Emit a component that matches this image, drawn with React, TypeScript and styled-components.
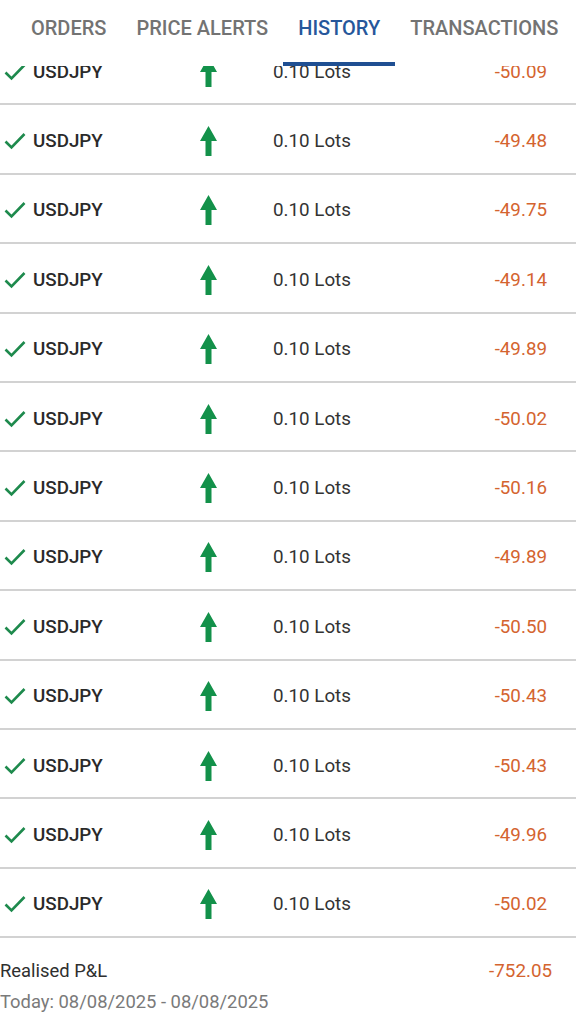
import styled, { createGlobalStyle } from 'styled-components';

const GlobalStyle = createGlobalStyle`
  html, body {
    margin: 0;
    padding: 0;
    background: #ffffff;
    font-family: Roboto, "Liberation Sans", Arial, sans-serif;
  }
`;

const Screen = styled.div`
  width: 576px;
  height: 1024px;
  overflow: hidden;
  background: #ffffff;
`;

const TabBar = styled.div`
  position: sticky;
  top: 0;
  z-index: 2;
  height: 66px;
  display: flex;
  align-items: flex-start;
  padding-left: 16px;
  background: #ffffff;
`;

const Tab = styled.div<{ $active?: boolean }>`
  position: relative;
  height: 66px;
  padding: 16px 15px 0;
  box-sizing: border-box;
  font-size: 20px;
  font-weight: 500;
  white-space: nowrap;
  color: ${(p) => (p.$active ? '#26579b' : '#737373')};
`;

const Indicator = styled.span`
  position: absolute;
  left: 0;
  right: 0;
  bottom: 0;
  height: 4px;
  background: #1f4f92;
`;

// the list is scrolled a little, so its first row sits under the tab bar
const List = styled.div`
  margin-top: -30px;
`;

const Row = styled.div`
  height: 69.4px;
  box-sizing: border-box;
  display: flex;
  align-items: center;
  padding-top: 4px;
  border-bottom: 2px solid #d2d2d2;
`;

const Symbol = styled.div`
  display: flex;
  align-items: center;
  gap: 7px;
  width: 196px;
  padding-left: 4px;
  font-size: 18.8px;
  font-weight: 500;
  color: #2a2a2a;
`;

const Side = styled.div`
  width: 73px;
  display: flex;
  align-items: center;
`;

const Lots = styled.div`
  flex: 1;
  font-size: 18.8px;
  color: #333333;
`;

const Amount = styled.div<{ $big?: boolean }>`
  padding-right: ${(p) => (p.$big ? '24px' : '29px')};
  font-size: 18.8px;
  color: #d4642f;
`;

const Summary = styled.div`
  padding-top: 22px;
  display: grid;
  grid-template-columns: 1fr auto;
  row-gap: 9px;
`;

const SummaryLabel = styled.div`
  font-size: 18.4px;
  color: #2f2f2f;
`;

const SummaryRange = styled.div`
  grid-column: 1 / span 2;
  font-size: 18.4px;
  color: #7a7a7a;
`;

const CheckIcon = () => (
  <svg width="22" height="18" viewBox="0 0 22 18">
    <polyline points="1.5,9.5 7.5,15.5 20.5,2" fill="none" stroke="#1e8a4d" strokeWidth="2.6" />
  </svg>
);

const UpArrow = () => (
  <svg width="17" height="30" viewBox="0 0 17 30">
    <polygon points="8.5,0 17,15 11.5,15 11.5,30 5.5,30 5.5,15 0,15" fill="#13914a" />
  </svg>
);

const amounts = [
  '-50.09', '-49.48', '-49.75', '-49.14', '-49.89', '-50.02', '-50.16',
  '-49.89', '-50.50', '-50.43', '-50.43', '-49.96', '-50.02',
];

const tabs = ['ORDERS', 'PRICE ALERTS', 'HISTORY', 'TRANSACTIONS'];

const App = () => {
  return (
    <Screen>
      <GlobalStyle />
      <TabBar>
        {tabs.map((t) => (
          <Tab key={t} $active={t === 'HISTORY'}>
            {t}
            {t === 'HISTORY' && <Indicator />}
          </Tab>
        ))}
      </TabBar>
      <List>
        {amounts.map((a, i) => (
          <Row key={i}>
            <Symbol>
              <CheckIcon />
              USDJPY
            </Symbol>
            <Side>
              <UpArrow />
            </Side>
            <Lots>0.10 Lots</Lots>
            <Amount>{a}</Amount>
          </Row>
        ))}
      </List>
      <Summary>
        <SummaryLabel>Realised P&amp;L</SummaryLabel>
        <Amount $big>-752.05</Amount>
        <SummaryRange>Today: 08/08/2025 - 08/08/2025</SummaryRange>
      </Summary>
    </Screen>
  );
};

export default App;
